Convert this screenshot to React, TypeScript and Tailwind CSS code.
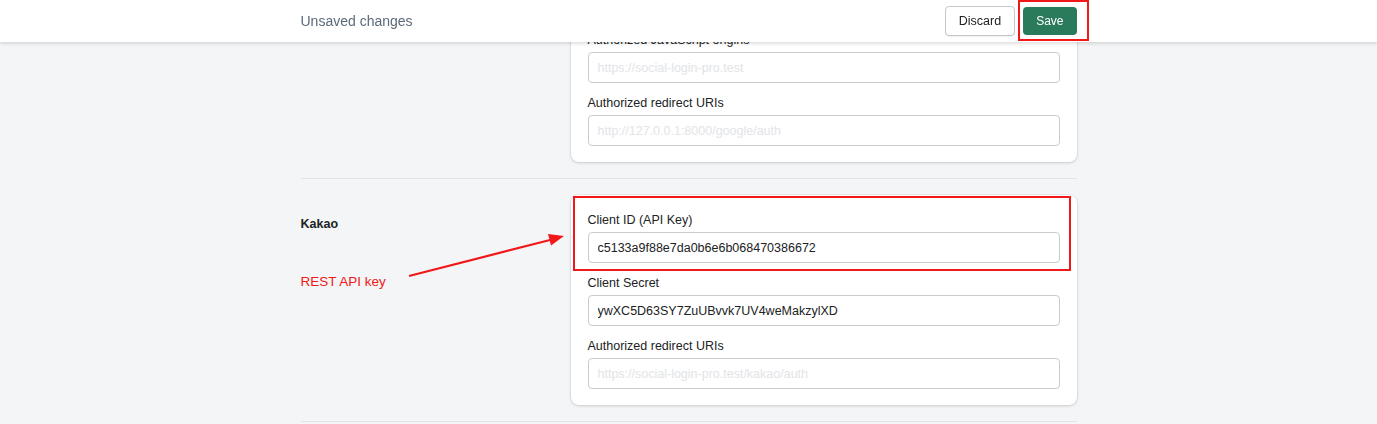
import React from "react";

type Field = { label: string; value?: string; placeholder?: string };

const googleFields: Field[] = [
  { label: "Client ID", placeholder: "1234567890-abc.apps.googleusercontent.com" },
  { label: "Client Secret", placeholder: "GOCSPX-xxxxxxxxxxxxxxxx" },
  { label: "Authorized JavaScript origins", placeholder: "https://social-login-pro.test" },
  { label: "Authorized redirect URIs", placeholder: "http://127.0.0.1:8000/google/auth" },
];

const kakaoFields: Field[] = [
  { label: "Client ID (API Key)", value: "c5133a9f88e7da0b6e6b068470386672" },
  { label: "Client Secret", value: "ywXC5D63SY7ZuUBvvk7UV4weMakzylXD" },
  { label: "Authorized redirect URIs", placeholder: "https://social-login-pro.test/kakao/auth" },
];

function TextField({ field }: { field: Field }) {
  return (
    <label className="block">
      <span className="block text-[12.5px] leading-4 text-[#202223] mb-1">{field.label}</span>
      <input
        readOnly
        defaultValue={field.value}
        placeholder={field.placeholder}
        className="block w-full h-[31px] px-[9px] rounded-[4px] border border-[#c9cccf] bg-white text-[12.5px] text-[#202223] placeholder:text-[#e2e4e7] outline-none"
      />
    </label>
  );
}

function Card({ fields, children }: { fields: Field[]; children?: React.ReactNode }) {
  return (
    <div className="relative flex-1 bg-white rounded-[8px] shadow-[0_0_0_1px_rgba(63,63,68,0.04),0_1px_3px_rgba(63,63,68,0.2)] px-[17px] pt-[17px] pb-4 flex flex-col gap-3">
      {fields.map((f) => (
        <TextField key={f.label} field={f} />
      ))}
      {children}
    </div>
  );
}

export default function App() {
  return (
    <div
      className="relative h-[424px] overflow-hidden bg-[#f4f5f7] text-[#202223]"
      style={{ fontFamily: "'Liberation Sans', Arial, sans-serif" }}
    >
      {/* ── Contextual save bar ── */}
      <header className="fixed top-0 inset-x-0 z-20 h-[42px] bg-white shadow-[0_2px_3px_rgba(0,0,0,0.12)]">
        <div className="mx-auto max-w-[776px] h-full flex items-center justify-between">
          <span className="text-[14px] text-[#5c6a79]">Unsaved changes</span>
          <div className="flex items-center gap-2">
            <button className="h-[30px] px-[13px] rounded-[4px] border border-[#c4c8cc] bg-white text-[12.5px] text-[#202223] shadow-[0_1px_0_rgba(0,0,0,0.05)]">
              Discard
            </button>
            <div className="relative">
              <button className="h-[28px] px-[13px] rounded-[4px] bg-[#2a7b5c] text-[12px] text-white">
                Save
              </button>
              <div className="pointer-events-none absolute -left-[5px] -top-[7px] -right-[12px] -bottom-[6px] border-2 border-[#f01818]" />
            </div>
          </div>
        </div>
      </header>

      {/* ── Provider settings ── */}
      <main className="-mt-[127px] mx-auto max-w-[776px]">
        <section className="flex py-4 border-b border-[#e1e3e5]">
          <div className="w-[270px] shrink-0 pt-[19px]">
            <h3 className="text-[12.5px] leading-5 font-semibold">Google</h3>
          </div>
          <Card fields={googleFields} />
        </section>

        <section className="relative flex py-4 border-b border-[#e1e3e5]">
          <div className="w-[270px] shrink-0 pt-[19px]">
            <h3 className="text-[12.5px] leading-5 font-semibold">Kakao</h3>
            <p className="mt-[39px] text-[13.5px] leading-[18px] text-[#f01818]">REST API key</p>
          </div>
          <Card fields={kakaoFields}>
            <div className="pointer-events-none absolute left-[2px] top-[1px] w-[498px] h-[75px] border-2 border-[#f01818]" />
          </Card>

          {/* arrow from the note to the Client ID field */}
          <svg
            className="pointer-events-none absolute left-0 top-0"
            width="280"
            height="120"
            viewBox="0 0 280 120"
            aria-hidden
          >
            <g transform="translate(-300,-179)">
              <line x1="408" y1="276" x2="549" y2="240" stroke="#f01818" strokeWidth="2.2" />
              <polygon points="563,236 550,245.6 547,233.9" fill="#f01818" />
            </g>
          </svg>
        </section>
      </main>
    </div>
  );
}
